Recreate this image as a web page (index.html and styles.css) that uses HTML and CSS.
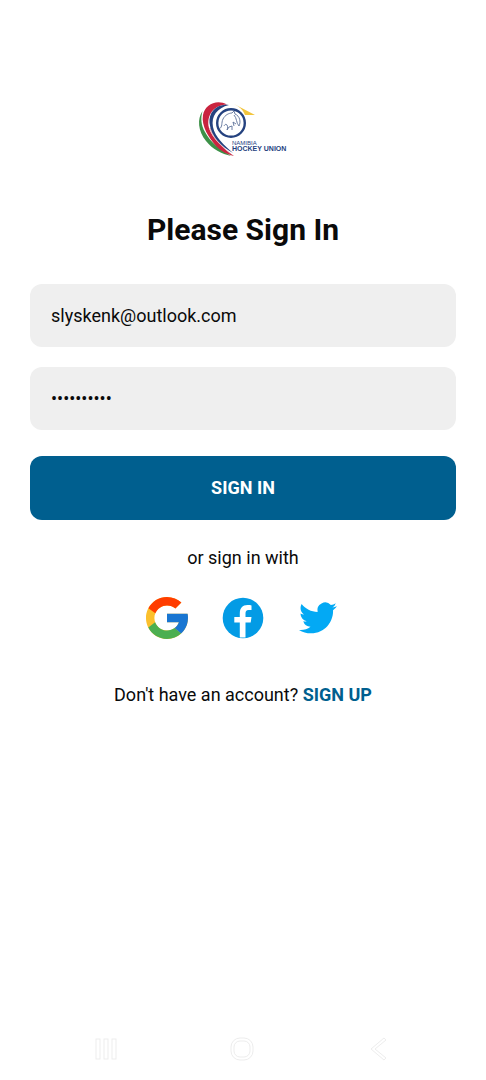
FILE: index.html
```html
<!DOCTYPE html>
<html lang="en">
<head>
<meta charset="utf-8">
<meta name="viewport" content="width=device-width, initial-scale=1">
<title>Sign In</title>
<link rel="stylesheet" href="styles.css">
</head>
<body>
<main class="screen">
  <svg class="logo" viewBox="0 0 105 70" role="img" aria-label="Namibia Hockey Union">
    <path fill="#3d9148" d="M11.500 16C6 24 7 36 15 46C21 54 31 59 40 61C29 54 19 47 14 37C10 30 9.500 23 11.500 16Z"/>
    <path fill="#c9243f" d="M36 9.500C26 4 14 9 12 20C10 31 18 43 25 51C30 56 35 59 43 61C32 53 21 43 18 33C15 20 23 10 36 9.500Z"/>
    <path fill="#e9b9be" d="M18 33C21 43 32 53 42 61C31 51 22 43 20 33Z"/>
    <path fill="#25427f" d="M38 10C26 8 17.500 17 18.500 28C20 42 31 52 42 58C33 50 24 42 22 32C20 21 26 13 38 10Z"/>
    <path fill="#f2c53d" d="M43 9L64 20L54 20C52 15 49 12 43 9Z"/>
    <circle cx="40" cy="28" r="13.800" fill="#fff" stroke="#25427f" stroke-width="2.400"/>
    <path class="horse" d="M28 34C32 32 30 28 32 24C34 20 38 18 41 18L43 16L44 19C49 21 50 27 48 31M43 20C46 23 45 28 48 31M33 31C35 27 38 31 36 35M36 35L38 32L41 31L41 35M43 31L42 27L45 29"/>
    <text class="logo-top" x="41" y="50">NAMIBIA</text>
    <text class="logo-name" x="41" y="56">HOCKEY UNION</text>
  </svg>
  <h1 class="title">Please Sign In</h1>
  <form class="form">
    <input class="field" type="email" aria-label="Email" value="slyskenk@outlook.com">
    <input class="field" type="password" aria-label="Password" value="abcdefghij">
    <button class="submit" type="button">SIGN IN</button>
  </form>
  <p class="note">or sign in with</p>
  <div class="social">
    <button class="social-button" type="button" aria-label="Google">
      <svg viewBox="4 4 40 40">
        <path fill="#fbc02d" d="M43.600 20H24v8h11.300C33.700 32.700 29.200 36 24 36c-6.600 0-12-5.400-12-12s5.400-12 12-12c3.100 0 5.800 1.200 8 3l5.700-5.700C34 6.100 29.300 4 24 4C13 4 4 13 4 24s9 20 20 20s20-9 20-20c0-1.300-.1-2.700-.4-4z"/>
        <path fill="#ff3d00" d="M6.300 14.700l6.600 4.800C14.700 15.100 19 12 24 12c3.100 0 5.800 1.200 8 3l5.700-5.700C34 6.100 29.300 4 24 4C16.300 4 9.700 8.300 6.300 14.700z"/>
        <path fill="#4caf50" d="M24 44c5.200 0 9.900-2 13.400-5.200l-6.200-5.200C29.200 35.100 26.700 36 24 36c-5.200 0-9.600-3.300-11.300-7.900l-6.500 5C9.500 39.600 16.200 44 24 44z"/>
        <path fill="#1976d2" d="M43.600 20H24v8h11.300c-.8 2.200-2.200 4.200-4.100 5.600l6.200 5.200C37 39.200 44 34 44 24c0-1.300-.1-2.700-.4-4z"/>
      </svg>
    </button>
    <button class="social-button" type="button" aria-label="Facebook">
      <svg viewBox="0 0 42 42">
        <circle cx="21" cy="21" r="20.300" fill="#039be5"/>
        <path fill="#fff" d="M17.800 40.500V25.500H12.300V20H17.800V16.500C17.800 11 20.500 8 25.500 8C27.500 8 28.600 8.200 29.500 8.400V13H26.500C24.300 13 23.500 14.200 23.500 16.500V20H29.500L28.700 25.500H23.500V40.500Z"/>
      </svg>
    </button>
    <button class="social-button" type="button" aria-label="Twitter">
      <svg viewBox="0 0 42 42">
        <path fill="#03a9f4" transform="translate(1 2) scale(1.580)" d="M23.953 4.570a10 10 0 0 1-2.825.775 4.958 4.958 0 0 0 2.163-2.723c-.951.555-2.005.959-3.127 1.184a4.920 4.920 0 0 0-8.384 4.482C7.690 8.095 4.067 6.130 1.640 3.162a4.822 4.822 0 0 0-.666 2.475c0 1.710.870 3.213 2.188 4.096a4.904 4.904 0 0 1-2.228-.616v.060a4.923 4.923 0 0 0 3.946 4.827 4.996 4.996 0 0 1-2.212.085 4.936 4.936 0 0 0 4.604 3.417 9.867 9.867 0 0 1-6.102 2.105c-.390 0-.779-.023-1.170-.067a13.995 13.995 0 0 0 7.557 2.209c9.053 0 13.998-7.496 13.998-13.985 0-.210 0-.420-.015-.630A9.935 9.935 0 0 0 24 4.590z"/>
      </svg>
    </button>
  </div>
  <p class="note">Don't have an account? <a class="link" href="#">SIGN UP</a></p>
  <nav class="system-nav" aria-label="System">
    <button class="nav-button" type="button" aria-label="Recent apps">
      <svg viewBox="0 0 26 26"><rect x="3" y="3" width="4" height="20"/><rect x="11" y="3" width="4" height="20"/><rect x="19" y="3" width="4" height="20"/></svg>
    </button>
    <button class="nav-button" type="button" aria-label="Home">
      <svg viewBox="0 0 26 26"><rect x="1" y="2" width="22" height="22" rx="9"/><rect x="4" y="5" width="16" height="16" rx="6"/></svg>
    </button>
    <button class="nav-button" type="button" aria-label="Back">
      <svg viewBox="0 0 26 26"><path d="M17 2L4 13L17 24L19 22L8 13L19 4Z"/></svg>
    </button>
  </nav>
</main>
</body>
</html>
```
FILE: styles.css
```css
* {
  box-sizing: border-box;
}

body {
  margin: 0;
  background: #fff;
  color: #0a0a0a;
  font-family: Roboto, "Liberation Sans", sans-serif;
  font-size: 18px;
  line-height: 24px;
}

button,
input {
  border: 0;
  font: inherit;
}

.screen {
  display: flex;
  flex-direction: column;
  align-items: center;
  min-height: 100vh;
  padding: 95px 30px 18px;
}

.logo {
  width: 105px;
  height: 70px;
}

.horse {
  fill: none;
  stroke: #5c7099;
  stroke-width: 0.9;
}

.logo-top,
.logo-name {
  fill: #25427f;
  font-family: "Liberation Sans", sans-serif;
  font-size: 6px;
}

.logo-name {
  font-size: 7px;
  font-weight: 700;
}

.title {
  margin: 45px 0 34px;
  font-size: 30px;
  font-weight: 700;
  line-height: 40px;
}

.form {
  display: flex;
  flex-direction: column;
  gap: 20px;
  width: 100%;
}

.field {
  width: 100%;
  height: 63px;
  padding: 0 21px;
  border-radius: 12px;
  background: #efefef;
  color: inherit;
}

.submit {
  height: 64px;
  margin-top: 6px;
  border-radius: 12px;
  background: #005f8f;
  color: #fff;
  font-weight: 700;
}

.note {
  margin: 26px 0 0;
}

.social {
  display: flex;
  gap: 34px;
  margin: 27px 0 18px;
}

.social-button {
  width: 42px;
  height: 42px;
  padding: 0;
  background: none;
}

.social-button svg,
.nav-button svg {
  display: block;
  width: 100%;
  height: 100%;
}

.link {
  color: #005f8f;
  font-weight: 700;
  text-decoration: none;
}

.system-nav {
  display: flex;
  justify-content: space-between;
  width: 100%;
  margin-top: auto;
  padding: 0 63px;
}

.nav-button {
  width: 26px;
  height: 26px;
  padding: 0;
  background: none;
}

.nav-button svg {
  fill: none;
  stroke: #ededed;
}
```
